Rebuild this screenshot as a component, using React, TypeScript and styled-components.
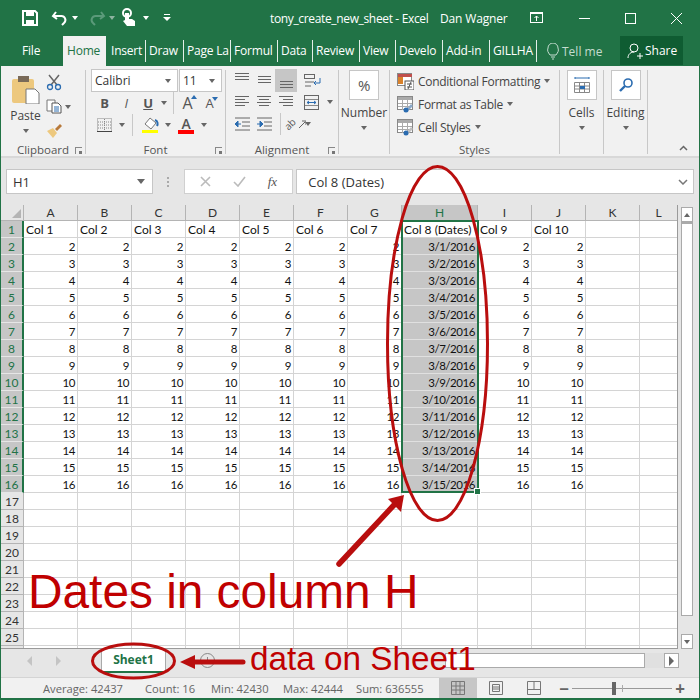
import { FC, ReactNode } from "react";
import styled, { createGlobalStyle } from "styled-components";

const GlobalStyle = createGlobalStyle`
  html, body { margin: 0; padding: 0; background: #e6e6e6; }
  * { box-sizing: border-box; }
`;

const UI_FONT = `"Open Sans", "Noto Sans", sans-serif`;
const CELL_FONT = `Lato, "Open Sans", sans-serif`;
const GREEN = "#217346";
const RED = "#c00000";

const Page = styled.div`
  position: relative;
  width: 700px;
  height: 700px;
  overflow: hidden;
  display: flex;
  flex-direction: column;
  border: solid ${GREEN};
  border-width: 0 1px 2px 1px;
  font-family: ${UI_FONT};
  background: #e6e6e6;
`;

/* ---------- title bar ---------- */
const TitleBar = styled.div`
  height: 36px;
  margin: 0 -1px;
  background: ${GREEN};
  color: #fff;
  display: flex;
  align-items: center;
  padding-left: 21px;
  font-size: 12px;
  letter-spacing: -0.15px;
`;
const Quick = styled.div`
  width: 249px;
  display: flex;
  align-items: center;
`;
const TitleText = styled.span`
  width: 170px;
  white-space: nowrap;
  letter-spacing: -0.35px;
`;
const UserName = styled.span`
  width: 90px;
  white-space: nowrap;
`;
const WinButtons = styled.div`
  display: flex;
  align-items: center;
`;

/* ---------- tabs ---------- */
const TabBar = styled.div`
  height: 30px;
  margin: 0 -1px;
  background: ${GREEN};
  display: flex;
  align-items: stretch;
  padding-left: 11px;
  position: relative;
`;
const Tab = styled.div<{ $w: number; $active?: boolean; $sep?: boolean }>`
  width: ${(p) => p.$w}px;
  flex: none;
  overflow: hidden;
  white-space: nowrap;
  color: ${(p) => (p.$active ? GREEN : "#fff")};
  background: ${(p) => (p.$active ? "#f1f1f1" : "transparent")};
  font-size: 12px;
  letter-spacing: -0.2px;
  line-height: 30px;
  padding-left: ${(p) => (p.$active ? 4 : 3)}px;
  position: relative;
  &::after {
    content: "";
    display: ${(p) => (p.$sep ? "block" : "none")};
    position: absolute;
    right: 0;
    top: 4px;
    bottom: 4px;
    width: 1px;
    background: #e4efe9;
  }
`;
const TellMe = styled.div`
  width: 83px;
  display: flex;
  align-items: center;
  gap: 3px;
  padding-left: 10px;
  color: #c4dccf;
  font-size: 12px;
`;
const Share = styled.div`
  width: 63px;
  height: 29px;
  background: #0f5c32;
  color: #fff;
  display: flex;
  align-items: center;
  gap: 2px;
  padding-left: 7px;
  font-size: 12px;
`;

/* ---------- ribbon ---------- */
const Ribbon = styled.div`
  height: 92px;
  background: #f1f1f1;
  display: flex;
  border-bottom: 2px solid #d8d8d8;
  position: relative;
  color: #444;
  font-size: 12px;
  letter-spacing: -0.3px;
`;
const Group = styled.div<{ $w: number }>`
  width: ${(p) => p.$w}px;
  flex: none;
  position: relative;
  margin: 4px 0 2px;
  border-right: 1px solid #c8c8c8;
  display: flex;
  flex-direction: column;
`;
const GroupBody = styled.div`
  height: 73px;
  flex: none;
  display: flex;
`;
const GroupLabel = styled.div`
  height: 11px;
  line-height: 14px;
  text-align: center;
  font-size: 11.5px;
  letter-spacing: 0;
  color: #555;
`;
const Launcher = styled.span`
  position: absolute;
  right: 3px;
  bottom: 0;
  width: 7px;
  height: 7px;
  border: solid #888;
  border-width: 1px 0 0 1px;
  &::after {
    content: "";
    position: absolute;
    right: 0;
    bottom: 0;
    width: 3px;
    height: 3px;
    background: #777;
  }
`;
const Caret = styled.i<{ $light?: boolean }>`
  display: inline-block;
  width: 0;
  height: 0;
  flex: none;
  border-left: 3.5px solid transparent;
  border-right: 3.5px solid transparent;
  border-top: 4px solid ${(p) => (p.$light ? "#8eb3a0" : "#666")};
`;
const WhiteCaret = styled(Caret)`
  border-top-color: #fff;
`;

const PasteColumn = styled.div`
  width: 41px;
  margin-left: 4px;
  display: flex;
  flex-direction: column;
  align-items: center;
  padding-top: 6px;
`;
const PasteLabel = styled.div`
  margin-top: 3px;
  margin-bottom: 5px;
  line-height: 17px;
  letter-spacing: 0;
`;
const ClipTools = styled.div`
  display: flex;
  flex-direction: column;
  gap: 3px;
  padding-top: 2px;
`;
const ClipTool = styled.div`
  display: flex;
  align-items: center;
  gap: 3px;
  height: 21px;
`;

const ToolColumn = styled.div<{ $pl: number }>`
  padding-left: ${(p) => p.$pl}px;
  margin-top: -1px;
  display: flex;
  flex-direction: column;
`;
const Combos = styled.div`
  display: flex;
  gap: 1px;
`;
const Combo = styled.div<{ $w: number }>`
  width: ${(p) => p.$w}px;
  height: 23px;
  background: #fff;
  border: 1px solid #c6c6c6;
  display: flex;
  align-items: center;
  justify-content: space-between;
  padding: 0 6px 0 3px;
  font-size: 12px;
  letter-spacing: 0;
  color: #333;
`;
const ToolRow = styled.div<{ $h: number; $pl?: number }>`
  height: ${(p) => p.$h}px;
  display: flex;
  align-items: center;
  padding-left: ${(p) => p.$pl ?? 0}px;
`;
const ToolCell = styled.div<{ $w: number; $on?: boolean }>`
  width: ${(p) => p.$w}px;
  height: 100%;
  flex: none;
  display: flex;
  align-items: center;
  justify-content: center;
  gap: 3px;
  background: ${(p) => (p.$on ? "#c6c6c6" : "transparent")};
`;
const ToolSep = styled.span<{ $ml?: number; $mr?: number }>`
  width: 1px;
  height: 22px;
  margin: 0 ${(p) => p.$mr ?? 5}px 0 ${(p) => p.$ml ?? 5}px;
  flex: none;
  background: #c8c8c8;
`;
const Gap = styled.span<{ $w: number }>`
  width: ${(p) => p.$w}px;
  flex: none;
`;
const Mark = styled.span<{ $italic?: boolean; $under?: boolean }>`
  font-weight: ${(p) => (p.$italic ? 400 : 700)};
  font-style: ${(p) => (p.$italic ? "italic" : "normal")};
  text-decoration: ${(p) => (p.$under ? "underline" : "none")};
  font-size: 13px;
  color: #555;
`;
const SizeLetter = styled.span<{ $size: number }>`
  position: relative;
  font-size: ${(p) => p.$size}px;
  line-height: 1;
  color: #555;
  padding-right: 5px;
  svg {
    position: absolute;
    right: 0;
    top: 0;
  }
`;
const ColorLetter = styled.span<{ $c: string }>`
  width: 16px;
  height: 18px;
  display: block;
  text-align: center;
  font-size: 14px;
  font-weight: 600;
  line-height: 15px;
  color: #555;
  border-bottom: 4px solid ${(p) => p.$c};
`;
const TiltedText = styled.span`
  display: block;
  font-size: 10px;
  line-height: 1;
  color: #555;
  transform: rotate(-45deg);
`;

const BigColumn = styled.div`
  flex: 1;
  display: flex;
  flex-direction: column;
  align-items: center;
`;
const BigBox = styled.div`
  width: 30px;
  height: 30px;
  background: #fff;
  border: 1px solid #c6c6c6;
  display: flex;
  align-items: center;
  justify-content: center;
  font-size: 15px;
  color: #555;
`;
const BigLabel = styled.div`
  margin-top: 4px;
  margin-bottom: 5px;
  line-height: 17px;
  letter-spacing: 0;
  white-space: nowrap;
`;
const StyleList = styled.div`
  display: flex;
  flex-direction: column;
  gap: 3px;
  padding: 1px 0 0 7px;
`;
const StyleRow = styled.div`
  display: flex;
  align-items: center;
  height: 20px;
  gap: 4px;
  white-space: nowrap;
`;
const Collapse = styled.svg`
  position: absolute;
  right: 11px;
  bottom: 5px;
`;

/* ---------- formula bar ---------- */
const FormulaBar = styled.div`
  height: 47px;
  display: flex;
  align-items: flex-start;
  padding: 11px 5px 0 5px;
  background: #e6e6e6;
`;
const NameBox = styled.div`
  width: 147px;
  height: 25px;
  background: #fff;
  border: 1px solid #c6c6c6;
  display: flex;
  align-items: center;
  justify-content: space-between;
  padding: 0 7px 0 6px;
  font-size: 13px;
  color: #333;
`;
const Grip = styled.div`
  width: 31px;
  height: 25px;
  display: flex;
  flex-direction: column;
  align-items: center;
  justify-content: center;
  gap: 2px;
  i {
    width: 2px;
    height: 2px;
    background: #aaa;
  }
`;
const FormulaBtns = styled.div`
  width: 110px;
  height: 25px;
  background: #fff;
  border: 1px solid #d0d0d0;
  display: flex;
  align-items: center;
  justify-content: space-around;
  padding: 0 4px;
  color: #bbb;
  font-size: 14px;
`;
const Fx = styled.span`
  font-family: "Liberation Serif", serif;
  font-style: italic;
  color: #555;
  font-size: 13px;
`;
const FormulaInput = styled.div`
  margin-left: 3px;
  width: 399px;
  height: 25px;
  background: #fff;
  border: 1px solid #c6c6c6;
  display: flex;
  align-items: center;
  justify-content: space-between;
  padding: 0 5px 0 11px;
  font-size: 13px;
  color: #333;
`;

/* ---------- sheet ---------- */
const SheetArea = styled.div`
  height: 444px;
  display: flex;
  position: relative;
`;
const SheetGrid = styled.div`
  width: 677px;
  flex: none;
  display: grid;
  grid-template-columns: 23px repeat(7, 54px) 76px repeat(3, 54px) 38px;
  grid-auto-rows: 17px;
  grid-template-rows: 16px;
  background: #fff;
  overflow: hidden;
  border-bottom: 1px solid #9a9a9a;
  border-right: 1px solid #9a9a9a;
  font-family: ${CELL_FONT};
  font-size: 12px;
  color: #111;
`;
const Corner = styled.div`
  background: #e6e6e6;
  border: solid #b4b4b4;
  border-width: 0 1px 1px 0;
  position: relative;
  &::after {
    content: "";
    position: absolute;
    right: 2px;
    bottom: 2px;
    border-left: 9px solid transparent;
    border-bottom: 9px solid #b4b4b4;
  }
`;
const ColHead = styled.div<{ $on?: boolean }>`
  background: ${(p) => (p.$on ? "#c6c6c6" : "#e6e6e6")};
  color: ${(p) => (p.$on ? GREEN : "#333")};
  border: solid #b4b4b4;
  border-width: 0 1px 1px 0;
  text-align: center;
  line-height: 16px;
`;
const RowHead = styled.div<{ $on?: boolean }>`
  background: ${(p) => (p.$on ? "#c6c6c6" : "#e6e6e6")};
  color: ${(p) => (p.$on ? GREEN : "#333")};
  border-bottom: 1px solid ${(p) => (p.$on ? "#e6e6e6" : "#b4b4b4")};
  border-right: ${(p) => (p.$on ? `2px solid ${GREEN}` : "1px solid #b4b4b4")};
  text-align: center;
  padding-top: 1px;
  line-height: 15px;
`;
const Cell = styled.div<{ $on?: boolean; $num?: boolean }>`
  background: ${(p) => (p.$on ? "#c6c6c6" : "#fff")};
  border: solid ${(p) => (p.$on ? "#e0e0e0" : "#d4d4d4")};
  border-width: 0 1px 1px 0;
  text-align: ${(p) => (p.$num ? "right" : "left")};
  font-size: ${(p) => (p.$num ? 11.5 : 12)}px;
  letter-spacing: ${(p) => (p.$num ? -0.45 : 0)}px;
  padding: 1px 2px 0;
  line-height: 15px;
  white-space: nowrap;
`;
const Selection = styled.div`
  position: absolute;
  left: 400px;
  top: 15px;
  width: 78px;
  height: 273px;
  border: 2px solid ${GREEN};
  pointer-events: none;
  &::after {
    content: "";
    position: absolute;
    right: -3px;
    bottom: -3px;
    width: 5px;
    height: 5px;
    background: ${GREEN};
    outline: 1px solid #fff;
  }
`;
const VScroll = styled.div`
  flex: 1;
  display: flex;
  flex-direction: column;
  padding: 2px 6px 0 3px;
`;
const ScrollBtn = styled.div`
  height: 15px;
  flex: none;
  background: #fff;
  border: 1px solid #aaa;
  display: flex;
  align-items: center;
  justify-content: center;
`;
const VThumb = styled.div`
  flex: 1;
  background: #fff;
  border: 1px solid #aaa;
  border-top-width: 2px;
  margin-bottom: 18px;
`;

/* ---------- sheet tabs ---------- */
const SheetTabsBar = styled.div`
  height: 28px;
  display: flex;
  align-items: flex-start;
  background: #e6e6e6;
`;
const NavArrows = styled.div`
  width: 100px;
  height: 24px;
  display: flex;
  align-items: center;
  gap: 24px;
  padding-left: 26px;
`;
const SheetTab = styled.div`
  width: 65px;
  height: 24px;
  background: #fff;
  border: solid #aaa;
  border-width: 0 1px;
  border-bottom: 2px solid ${GREEN};
  color: ${GREEN};
  font-weight: 700;
  font-size: 12px;
  text-align: center;
  line-height: 22px;
`;
const AddSheet = styled.div`
  width: 15px;
  height: 15px;
  margin: 4px 0 0 34px;
  border: 1px solid #888;
  border-radius: 50%;
  display: flex;
  align-items: center;
  justify-content: center;
`;
const HScroll = styled.div`
  margin: 4px 20px 0 auto;
  width: 234px;
  height: 15px;
  display: flex;
  background: #e0e0e0;
`;
const HThumb = styled.div`
  width: 200px;
  background: #fff;
  border: 1px solid #aaa;
`;
const HButton = styled.div`
  margin-left: auto;
  width: 15px;
  background: #fff;
  border: 1px solid #aaa;
  display: flex;
  align-items: center;
  justify-content: center;
`;
const ArrowRight = styled.i<{ $c?: string }>`
  width: 0;
  height: 0;
  border-top: 5px solid transparent;
  border-bottom: 5px solid transparent;
  border-left: 5px solid ${(p) => p.$c ?? "#666"};
`;
const ArrowLeft = styled.i`
  width: 0;
  height: 0;
  border-top: 5px solid transparent;
  border-bottom: 5px solid transparent;
  border-right: 5px solid #c4c4c4;
`;

/* ---------- status bar ---------- */
const StatusBar = styled.div`
  flex: 1;
  background: #f1f1f1;
  border-top: 1px solid #d4d4d4;
  display: flex;
  align-items: center;
  padding-left: 42px;
  font-size: 11.2px;
  color: #666;
`;
const Stat = styled.span<{ $w: number }>`
  width: ${(p) => p.$w}px;
  flex: none;
  white-space: nowrap;
`;
const ViewBtn = styled.div<{ $on?: boolean }>`
  width: 38px;
  height: 100%;
  flex: none;
  display: flex;
  align-items: center;
  justify-content: center;
  background: ${(p) => (p.$on ? "#c6c6c6" : "transparent")};
`;
const Zoom = styled.div`
  flex: 1;
  display: flex;
  align-items: center;
  padding-left: 6px;
  gap: 3px;
`;
const ZoomTrack = styled.div`
  position: relative;
  width: 100px;
  height: 1px;
  background: #999;
  &::before {
    content: "";
    position: absolute;
    left: 40px;
    top: -6px;
    width: 4px;
    height: 13px;
    background: #666;
  }
  &::after {
    content: "";
    position: absolute;
    left: 50px;
    top: -3px;
    width: 1px;
    height: 7px;
    background: #aaa;
  }
`;
const ZoomSign = styled.span`
  width: 10px;
  font-size: 17px;
  font-weight: 700;
  color: #666;
  text-align: center;
  line-height: 1;
`;

/* ---------- annotations lying over the window ---------- */
const Overlay = styled.svg`
  position: absolute;
  left: -1px;
  top: 0;
  pointer-events: none;
`;
const Callout = styled.div<{ $x: number; $y: number; $size: number }>`
  position: absolute;
  left: ${(p) => p.$x}px;
  top: ${(p) => p.$y}px;
  font-family: "Liberation Sans", Arial, sans-serif;
  font-size: ${(p) => p.$size}px;
  line-height: 1;
  color: ${RED};
  white-space: nowrap;
`;

/* ---------- small drawings ---------- */
type SvgProps = { w: number; h: number; children: ReactNode };
const Ico: FC<SvgProps> = ({ w, h, children }) => (
  <svg width={w} height={h} viewBox={`0 0 ${w} ${h}`} fill="none" style={{ flex: "none" }}>
    {children}
  </svg>
);

// each row of an alignment glyph: [x, length, y]
const Lines: FC<{ rows: [number, number, number][]; h?: number }> = ({ rows, h = 12 }) => (
  <Ico w={16} h={h}>
    {rows.map(([x, len, y], i) => (
      <rect key={i} x={x} y={y} width={len} height={1} fill="#666" />
    ))}
  </Ico>
);

const TableIcon: FC<{ accent: string }> = ({ accent }) => (
  <Ico w={17} h={17}>
    <rect x="0.5" y="0.5" width="15" height="13" fill="#fff" stroke="#888" />
    <rect x="1" y="1" width="14" height="3" fill="#aaa" />
    <path d="M1 7.5h14M1 10.5h14M5.5 1v13M10.5 1v13" stroke="#aaa" />
    <path d="M9 14l5-6 2 2-5 5z" fill={accent} />
    <circle cx="9" cy="14" r="2.5" fill="#2b6cb0" />
  </Ico>
);

const TAB_ITEMS: [string, number][] = [
  ["Insert", 40],
  ["Draw", 38],
  ["Page La", 47],
  ["Formul", 47],
  ["Data", 35],
  ["Review", 47],
  ["View", 36],
  ["Develo", 47],
  ["Add-in", 47],
  ["GILLHA", 47],
];

const COLS = ["A", "B", "C", "D", "E", "F", "G", "H", "I", "J", "K", "L"];
const ROWS = Array.from({ length: 26 }, (_, i) => i + 1);

const cellValue = (col: number, row: number) => {
  if (col > 9 || row > 16) return "";
  if (row === 1) return col === 7 ? "Col 8 (Dates)" : `Col ${col + 1}`;
  if (col === 7) return `3/${row - 1}/2016`;
  return String(row);
};

const Row: FC<{ r: number }> = ({ r }) => (
  <>
    {/* row 26 only peeks out below the window, its number is not visible */}
    <RowHead $on={r <= 16}>{r < 26 ? r : ""}</RowHead>
    {COLS.map((c, i) => {
      const on = i === 7 && r > 1 && r <= 16;
      return (
        <Cell key={c} $on={on} $num={r > 1}>
          {cellValue(i, r)}
        </Cell>
      );
    })}
  </>
);

const App: FC = () => {
  return (
    <Page>
      <GlobalStyle />
      <TitleBar>
        <Quick>
          <Ico w={18} h={18}>
            <path d="M2 2h12l2 2v12H2z" stroke="#fff" strokeWidth="2" />
            <rect x="5" y="2" width="8" height="5" fill="#fff" />
            <rect x="5" y="11" width="8" height="5" fill="#fff" />
          </Ico>
          <Gap $w={12} />
          <Ico w={18} h={18}>
            <path d="M5 3L2 7l4 3" stroke="#fff" strokeWidth="2" />
            <path d="M2 7h8a4 4 0 0 1 3 7l-2 2" stroke="#fff" strokeWidth="2" />
          </Ico>
          <Gap $w={3} />
          <WhiteCaret />
          <Gap $w={10} />
          <Ico w={18} h={18}>
            <path d="M13 3l3 4-4 3" stroke="#5b9a7a" strokeWidth="2" />
            <path d="M16 7H8a4 4 0 0 0-3 7l2 2" stroke="#5b9a7a" strokeWidth="2" />
          </Ico>
          <Gap $w={3} />
          <Caret $light />
          <Gap $w={4} />
          <Ico w={18} h={20}>
            <circle cx="8" cy="5" r="4" stroke="#fff" strokeWidth="2" />
            <path d="M6 5h4v6h3l3 2v5H8l-4-5 2-1z" fill="#fff" />
          </Ico>
          <Gap $w={6} />
          <WhiteCaret />
          <Gap $w={14} />
          <Ico w={8} h={8}>
            <rect x="1" y="0" width="6" height="1" fill="#fff" />
            <path d="M0 3h8L4 7z" fill="#fff" />
          </Ico>
        </Quick>
        <TitleText>tony_create_new_sheet - Excel</TitleText>
        <UserName>Dan Wagner</UserName>
        <WinButtons>
          <Ico w={14} h={12}>
            <rect x="0.5" y="0.5" width="12" height="10" stroke="#fff" />
            <rect x="0" y="0" width="13" height="2" fill="#fff" />
            <path d="M6.5 9V4M4.5 6l2-2 2 2" stroke="#fff" />
          </Ico>
          <Gap $w={35} />
          <Ico w={11} h={11}>
            <rect x="0" y="5" width="11" height="1" fill="#fff" />
          </Ico>
          <Gap $w={35} />
          <Ico w={11} h={11}>
            <rect x="0.5" y="0.5" width="10" height="10" stroke="#fff" />
          </Ico>
          <Gap $w={35} />
          <Ico w={11} h={11}>
            <path d="M0 0l11 11M11 0L0 11" stroke="#fff" />
          </Ico>
        </WinButtons>
      </TitleBar>

      <TabBar>
        <Tab $w={52} style={{ paddingLeft: 11 }}>File</Tab>
        <Tab $w={43} $active>Home</Tab>
        {TAB_ITEMS.map(([label, w], i) => (
          <Tab key={label} $w={w} $sep style={i === 0 ? { paddingLeft: 5 } : undefined}>
            {label}
          </Tab>
        ))}
        <TellMe>
          <Ico w={12} h={17}>
            <path d="M3 12C1 9 0 8 1 5a5 5 0 0 1 10 0c1 3 0 4-2 7z" stroke="#c4dccf" />
            <path d="M4 14h4M5 16h2" stroke="#c4dccf" />
          </Ico>
          Tell me
        </TellMe>
        <Share>
          <Ico w={16} h={16}>
            <circle cx="7" cy="5" r="4" stroke="#fff" />
            <path d="M1 15c0-4 3-6 6-6M10 13h6M13 10v6" stroke="#fff" />
          </Ico>
          Share
        </Share>
      </TabBar>

      <Ribbon>
        <Group $w={85}>
          <GroupBody>
            <PasteColumn>
              <Ico w={29} h={28}>
                <rect x="1" y="3" width="22" height="24" rx="2" fill="#edc87e" />
                <rect x="7" y="0" width="11" height="6" fill="#7a6a58" />
                <path d="M15 13h9l4 4v11H15z" fill="#fff" stroke="#777" />
              </Ico>
              <PasteLabel>Paste</PasteLabel>
              <Caret />
            </PasteColumn>
            <ClipTools>
              <ClipTool>
                <Ico w={16} h={17}>
                  <path d="M3 1l8 10M13 1L5 11" stroke="#666" strokeWidth="1.5" />
                  <circle cx="4" cy="13" r="2.5" stroke="#2b6cb0" strokeWidth="1.3" />
                  <circle cx="12" cy="13" r="2.5" stroke="#2b6cb0" strokeWidth="1.3" />
                </Ico>
              </ClipTool>
              <ClipTool>
                <Ico w={16} h={15}>
                  <path d="M1 1h8v11H1z" fill="#fff" stroke="#777" />
                  <path d="M6 4h6l3 3v7H6z" fill="#fff" stroke="#555" />
                  <path d="M8 8h5M8 10h5M8 12h5" stroke="#2b6cb0" />
                </Ico>
                <Caret />
              </ClipTool>
              <ClipTool>
                <Ico w={16} h={16}>
                  <path d="M1 8l6-3 4 5-4 5z" fill="#edc87e" />
                  <path d="M9 6l5-5 2 2-5 5z" fill="#b7793a" />
                </Ico>
              </ClipTool>
            </ClipTools>
          </GroupBody>
          <GroupLabel>Clipboard</GroupLabel>
          <Launcher />
        </Group>

        <Group $w={140}>
          <GroupBody>
            <ToolColumn $pl={5}>
              <Combos>
                <Combo $w={87}>
                  Calibri
                  <Caret />
                </Combo>
                <Combo $w={43}>
                  11
                  <Caret />
                </Combo>
              </Combos>
              <ToolRow $h={22} $pl={3}>
                <ToolCell $w={21}><Mark>B</Mark></ToolCell>
                <ToolCell $w={22}><Mark $italic>I</Mark></ToolCell>
                <ToolCell $w={22}><Mark $under>U</Mark></ToolCell>
                <Gap $w={2} />
                <Caret />
                <ToolSep $ml={6} $mr={5} />
                <ToolCell $w={22}>
                  <SizeLetter $size={16}>
                    A
                    <svg width="6" height="4" viewBox="0 0 6 4"><path d="M0 4l3-4 3 4z" fill="#2b6cb0" /></svg>
                  </SizeLetter>
                </ToolCell>
                <ToolCell $w={22}>
                  <SizeLetter $size={13}>
                    A
                    <svg width="6" height="4" viewBox="0 0 6 4"><path d="M0 0l3 4 3-4z" fill="#2b6cb0" /></svg>
                  </SizeLetter>
                </ToolCell>
              </ToolRow>
              <ToolRow $h={22} $pl={3}>
                <ToolCell $w={21}>
                  <Ico w={15} h={14}>
                    <path d="M.5.5h14v13H.5zM7.5 1v12M1 7h13M1 4h13M1 10h13" stroke="#888" strokeDasharray="1 1" />
                    <path d="M0 13.500h15" stroke="#444" />
                  </Ico>
                </ToolCell>
                <Gap $w={4} />
                <Caret />
                <ToolSep $ml={7} $mr={5} />
                <ToolCell $w={24}>
                  <Ico w={17} h={16}>
                    <path d="M3 7l5-6 6 5-5 6z" fill="#fff" stroke="#777" />
                    <path d="M13 3c3 1 3 4 2 6" stroke="#2b6cb0" strokeWidth="2" />
                    <rect x="0" y="13" width="16" height="3" fill="#ffff00" />
                  </Ico>
                </ToolCell>
                <Gap $w={3} />
                <Caret />
                <Gap $w={3} />
                <ToolCell $w={24}>
                  <ColorLetter $c="#ff0000">A</ColorLetter>
                </ToolCell>
                <Gap $w={3} />
                <Caret />
              </ToolRow>
            </ToolColumn>
          </GroupBody>
          <GroupLabel>Font</GroupLabel>
          <Launcher />
        </Group>

        <Group $w={113}>
          <GroupBody>
            <ToolColumn $pl={5}>
              <ToolRow $h={23}>
                <ToolCell $w={22}><Lines h={23} rows={[[1, 14, 4], [1, 14, 7], [1, 14, 10]]} /></ToolCell>
                <ToolCell $w={22}><Lines h={23} rows={[[2, 13, 7], [2, 13, 10], [2, 13, 13]]} /></ToolCell>
                <ToolCell $w={22} $on><Lines h={23} rows={[[2, 13, 12], [2, 13, 15], [2, 13, 18]]} /></ToolCell>
                <ToolCell $w={30}>
                  <Ico w={17} h={16}>
                    <rect x="0.5" y="1.500" width="10" height="4" stroke="#666" />
                    <path d="M1 9h9M1 13h6" stroke="#666" />
                    <path d="M16 5v5h-6M12 8l-2 2 2 2" stroke="#2b6cb0" />
                  </Ico>
                </ToolCell>
              </ToolRow>
              <ToolRow $h={22} style={{ marginTop: -1 }}>
                <ToolCell $w={22}><Lines rows={[[1, 14, 0], [1, 10, 3], [1, 14, 6], [1, 10, 9]]} /></ToolCell>
                <ToolCell $w={22}><Lines rows={[[1, 14, 0], [3, 10, 3], [1, 14, 6], [3, 10, 9]]} /></ToolCell>
                <ToolCell $w={22}><Lines rows={[[1, 14, 0], [5, 10, 3], [1, 14, 6], [5, 10, 9]]} /></ToolCell>
                <ToolCell $w={30}>
                  <Ico w={16} h={15}>
                    <rect x="0.5" y="0.5" width="14" height="14" stroke="#666" />
                    <path d="M1 4.500h13M1 10.500h13" stroke="#888" />
                    <path d="M3 7.500h9M3 7.500l2-1.500M3 7.500l2 1.500M12 7.500l-2-1.500M12 7.500l-2 1.500" stroke="#2b6cb0" />
                  </Ico>
                </ToolCell>
                <Caret />
              </ToolRow>
              <ToolRow $h={22}>
                <ToolCell $w={22}>
                  <Ico w={16} h={14}>
                    <path d="M1 1h15M8 5h8M8 9h8M1 13h15" stroke="#666" />
                    <path d="M1 7h6M1 7l3-3v6z" stroke="#2b6cb0" fill="#2b6cb0" />
                  </Ico>
                </ToolCell>
                <ToolCell $w={22}>
                  <Ico w={16} h={14}>
                    <path d="M1 1h15M8 5h8M8 9h8M1 13h15" stroke="#666" />
                    <path d="M1 7h5M7 7L4 4v6z" stroke="#2b6cb0" fill="#2b6cb0" />
                  </Ico>
                </ToolCell>
                <ToolSep $ml={5} $mr={4} />
                <ToolCell $w={20}>
                  <TiltedText>ab</TiltedText>
                  <Ico w={7} h={10}>
                    <path d="M0 9l6-6M3 2h4v4" stroke="#666" />
                  </Ico>
                </ToolCell>
                <Caret />
              </ToolRow>
            </ToolColumn>
          </GroupBody>
          <GroupLabel>Alignment</GroupLabel>
          <Launcher />
        </Group>

        <Group $w={51}>
          <BigColumn>
            <BigBox>%</BigBox>
            <BigLabel>Number</BigLabel>
            <Caret />
          </BigColumn>
        </Group>

        <Group $w={170}>
          <GroupBody>
            <StyleList>
              <StyleRow>
                <Ico w={17} h={17}>
                  <rect x="0.5" y="0.5" width="14" height="12" fill="#fff" stroke="#888" />
                  <rect x="1" y="1" width="14" height="3" fill="#c0504d" />
                  <rect x="1" y="4" width="5" height="7" fill="#d9822b" />
                  <rect x="8" y="8" width="9" height="9" fill="#fff" stroke="#555" />
                  <path d="M10 11h5M10 14h5M14 9l-3 7" stroke="#555" />
                </Ico>
                Conditional Formatting
                <Caret />
              </StyleRow>
              <StyleRow>
                <TableIcon accent="#8aa8c8" />
                Format as Table
                <Caret />
              </StyleRow>
              <StyleRow>
                <TableIcon accent="#c0c0c0" />
                Cell Styles
                <Caret />
              </StyleRow>
            </StyleList>
          </GroupBody>
          <GroupLabel>Styles</GroupLabel>
        </Group>

        <Group $w={44}>
          <BigColumn>
            <BigBox>
              <Ico w={16} h={18}>
                <path d="M1 2h14M1 1v2M15 1v2" stroke="#2b6cb0" />
                <path d="M.5 6.500h15v10H.5zM.5 10h15M.5 13h15M5.500 6v11M10.500 6v11" stroke="#888" />
                <rect x="6" y="10" width="5" height="3" fill="#2b6cb0" />
              </Ico>
            </BigBox>
            <BigLabel>Cells</BigLabel>
            <Caret />
          </BigColumn>
        </Group>

        <Group $w={44}>
          <BigColumn>
            <BigBox>
              <Ico w={14} h={14}>
                <circle cx="9" cy="5" r="4" stroke="#2b6cb0" strokeWidth="1.6" />
                <path d="M6 8l-5 5" stroke="#2b6cb0" strokeWidth="2.4" />
              </Ico>
            </BigBox>
            <BigLabel>Editing</BigLabel>
            <Caret />
          </BigColumn>
        </Group>

        <Collapse width="9" height="6" viewBox="0 0 9 6" fill="none">
          <path d="M1 5l3.500-3.500L8 5" stroke="#666" strokeWidth="1.5" />
        </Collapse>
      </Ribbon>

      <FormulaBar>
        <NameBox>
          H1
          <Caret style={{ borderLeftWidth: 4, borderRightWidth: 4, borderTopWidth: 5 }} />
        </NameBox>
        <Grip>
          <i />
          <i />
          <i />
        </Grip>
        <FormulaBtns>
          <Ico w={11} h={11}>
            <path d="M1 1l9 9M10 1l-9 9" stroke="#bbb" strokeWidth="1.6" />
          </Ico>
          <Ico w={13} h={11}>
            <path d="M1 6l4 4 7-9" stroke="#bbb" strokeWidth="1.6" />
          </Ico>
          <Fx>fx</Fx>
        </FormulaBtns>
        <FormulaInput>
          Col 8 (Dates)
          <Ico w={10} h={6}>
            <path d="M1 1l4 4 4-4" stroke="#777" strokeWidth="1.5" />
          </Ico>
        </FormulaInput>
      </FormulaBar>

      <SheetArea>
        <SheetGrid>
          <Corner />
          {COLS.map((c) => (
            <ColHead key={c} $on={c === "H"}>{c}</ColHead>
          ))}
          {ROWS.map((r) => (
            <Row key={r} r={r} />
          ))}
        </SheetGrid>
        <Selection />
        <VScroll>
          <ScrollBtn>
            <Caret style={{ transform: "rotate(180deg)" }} />
          </ScrollBtn>
          <VThumb />
          <ScrollBtn>
            <Caret />
          </ScrollBtn>
        </VScroll>
      </SheetArea>

      <SheetTabsBar>
        <NavArrows>
          <ArrowLeft />
          <ArrowRight $c="#c4c4c4" />
        </NavArrows>
        <SheetTab>Sheet1</SheetTab>
        <AddSheet>
          <Ico w={7} h={7}>
            <path d="M3.500 0v7M0 3.500h7" stroke="#888" />
          </Ico>
        </AddSheet>
        <HScroll>
          <HThumb />
          <HButton>
            <ArrowRight />
          </HButton>
        </HScroll>
      </SheetTabsBar>

      <StatusBar>
        <Stat $w={102}>Average: 42437</Stat>
        <Stat $w={66}>Count: 16</Stat>
        <Stat $w={72}>Min: 42430</Stat>
        <Stat $w={73}>Max: 42444</Stat>
        <Stat $w={83}>Sum: 636555</Stat>
        <ViewBtn $on>
          <Ico w={14} h={14}>
            <path d="M.5.5h13v13H.5zM.5 5h13M.5 9h13M5 .5v13M9 .5v13" stroke="#777" />
          </Ico>
        </ViewBtn>
        <ViewBtn>
          <Ico w={14} h={14}>
            <path d="M.5.5h13v13H.5zM3.500 3.500h7v7h-7zM4 6h6M4 8h6" stroke="#777" />
          </Ico>
        </ViewBtn>
        <ViewBtn>
          <Ico w={14} h={14}>
            <path d="M.5.5h13v13H.5zM.5 8.500h6.500v-8M7 8.500h6.500" stroke="#777" />
          </Ico>
        </ViewBtn>
        <Zoom>
          <ZoomSign>−</ZoomSign>
          <ZoomTrack />
          <ZoomSign>+</ZoomSign>
        </Zoom>
      </StatusBar>

      <Overlay width="700" height="700" viewBox="0 0 700 700" fill="none">
        <ellipse cx="437.500" cy="343.500" rx="50" ry="177" stroke="#b90e0e" strokeWidth="3" />
        <path d="M339 564L394 505" stroke="#b90e0e" strokeWidth="5.500" strokeLinecap="round" />
        <path d="M404 495L388 499L401 512Z" fill="#b90e0e" />
        <ellipse cx="133.500" cy="661" rx="41" ry="17" stroke="#b90e0e" strokeWidth="3" />
        <path d="M243 662H192" stroke="#b90e0e" strokeWidth="5" strokeLinecap="round" />
        <path d="M180 662L195 655V669Z" fill="#b90e0e" />
      </Overlay>
      <Callout $x={27} $y={568} $size={47.800}>Dates in column H</Callout>
      <Callout $x={249} $y={642} $size={33.300}>data on Sheet1</Callout>
    </Page>
  );
};

export default App;
